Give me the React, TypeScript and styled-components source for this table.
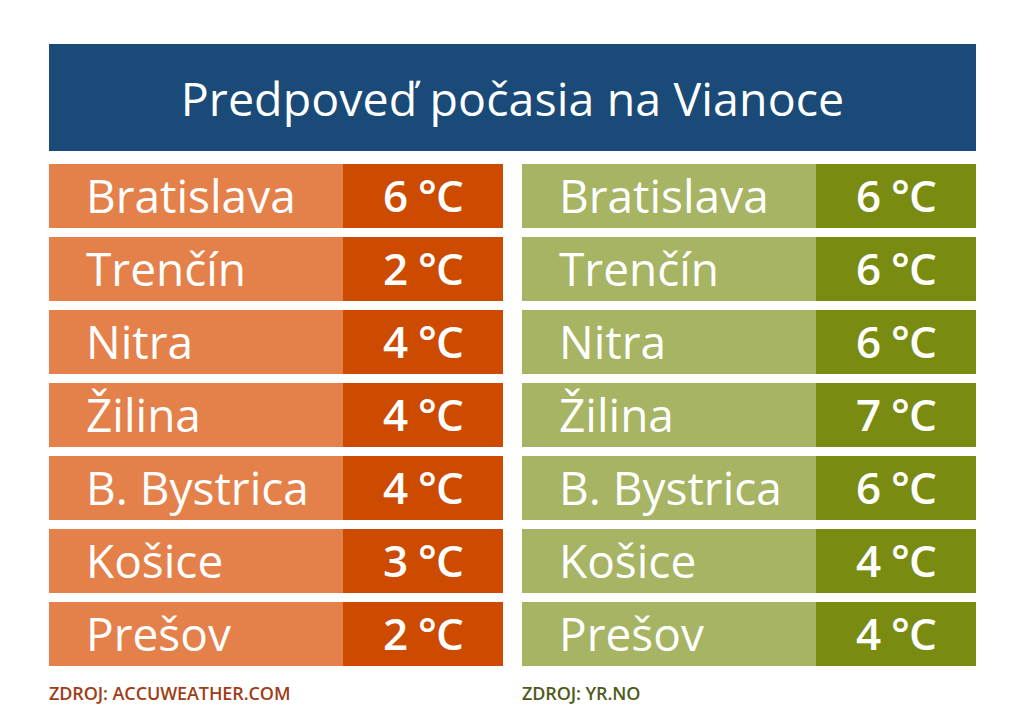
import React from "react";
import styled, { createGlobalStyle } from "styled-components";

const GlobalStyle = createGlobalStyle`
  body {
    margin: 0;
    background: #ffffff;
    font-family: "Open Sans", "Noto Sans", sans-serif;
  }
`;

const Page = styled.div`
  width: 1024px;
  height: 721px;
  box-sizing: border-box;
  padding: 44px 48px 0 49px;
`;

const Header = styled.div`
  height: 107px;
  background: #1a4a77;
  color: #ffffff;
  display: flex;
  align-items: center;
  justify-content: center;
  font-size: 46.5px;
  letter-spacing: 0.1px;
`;

const Tables = styled.div`
  display: grid;
  grid-template-columns: 454px 454px;
  column-gap: 19px;
  margin-top: 13px;
`;

const Column = styled.div`
  display: flex;
  flex-direction: column;
  gap: 9px;
`;

const Row = styled.div`
  display: grid;
  grid-template-columns: 294px 1fr;
  height: 64px;
`;

const Name = styled.div<{ $bg: string }>`
  background: ${(p) => p.$bg};
  color: #ffffff;
  font-size: 46px;
  line-height: 62px;
  padding-left: 37px;
  white-space: nowrap;
`;

const Value = styled.div<{ $bg: string }>`
  background: ${(p) => p.$bg};
  color: #ffffff;
  font-size: 44px;
  font-weight: 600;
  line-height: 62px;
  text-align: center;
  white-space: nowrap;
  letter-spacing: -0.8px;
`;

const Source = styled.div<{ $color: string }>`
  margin-top: 15px;
  font-size: 18px;
  font-weight: 600;
  color: ${(p) => p.$color};
  letter-spacing: -0.1px;
`;

type Table = {
  light: string;
  dark: string;
  source: string;
  sourceColor: string;
  temps: number[];
};

const cities = [
  "Bratislava",
  "Trenčín",
  "Nitra",
  "Žilina",
  "B. Bystrica",
  "Košice",
  "Prešov",
];

const tables: Table[] = [
  {
    light: "#e4814b",
    dark: "#cc4b00",
    source: "ZDROJ: ACCUWEATHER.COM",
    sourceColor: "#9e3d16",
    temps: [6, 2, 4, 4, 4, 3, 2],
  },
  {
    light: "#a6b463",
    dark: "#7a8b12",
    source: "ZDROJ: YR.NO",
    sourceColor: "#4f5a1a",
    temps: [6, 6, 6, 7, 6, 4, 4],
  },
];

export default function App() {
  return (
    <>
      <GlobalStyle />
      <Page>
        <Header>Predpoveď počasia na Vianoce</Header>
        <Tables>
          {tables.map((t) => (
            <div key={t.source}>
              <Column>
                {cities.map((city, i) => (
                  <Row key={city}>
                    <Name $bg={t.light}>{city}</Name>
                    <Value $bg={t.dark}>{t.temps[i]} °C</Value>
                  </Row>
                ))}
              </Column>
              <Source $color={t.sourceColor}>{t.source}</Source>
            </div>
          ))}
        </Tables>
      </Page>
    </>
  );
}
